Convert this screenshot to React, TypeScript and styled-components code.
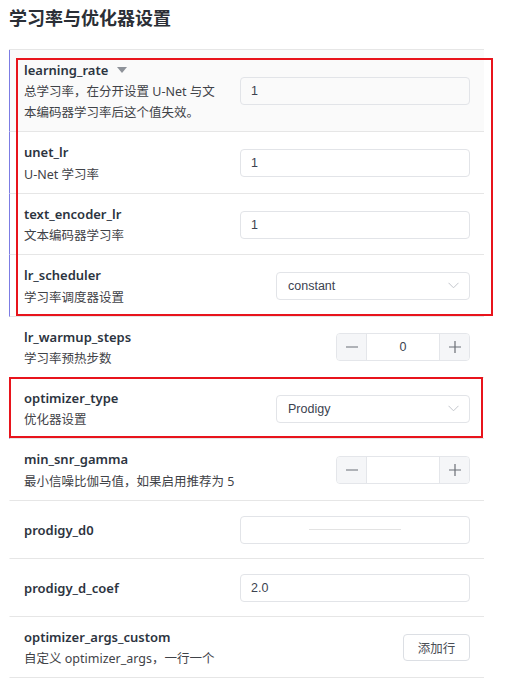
import React from 'react';
import styled, { createGlobalStyle } from 'styled-components';

const GlobalStyle = createGlobalStyle`
  body {
    margin: 0;
    background: #ffffff;
    font-family: "Noto Sans", "Noto Sans CJK SC", sans-serif;
    color: #303133;
  }
`;

interface Field {
  name: string;
  desc?: string;
  kind: 'text' | 'select' | 'number' | 'button' | 'blank';
  value?: string;
  caret?: boolean;
  marked?: boolean;
  hovered?: boolean;
}

const fields: Field[] = [
  { name: 'learning_rate', desc: '总学习率，在分开设置 U-Net 与文\n本编码器学习率后这个值失效。', kind: 'text', value: '1', caret: true, marked: true, hovered: true },
  { name: 'unet_lr', desc: 'U-Net 学习率', kind: 'text', value: '1', marked: true },
  { name: 'text_encoder_lr', desc: '文本编码器学习率', kind: 'text', value: '1', marked: true },
  { name: 'lr_scheduler', desc: '学习率调度器设置', kind: 'select', value: 'constant', marked: true },
  { name: 'lr_warmup_steps', desc: '学习率预热步数', kind: 'number', value: '0' },
  { name: 'optimizer_type', desc: '优化器设置', kind: 'select', value: 'Prodigy', marked: true },
  { name: 'min_snr_gamma', desc: '最小信噪比伽马值，如果启用推荐为 5', kind: 'number', value: '' },
  { name: 'prodigy_d0', kind: 'blank' },
  { name: 'prodigy_d_coef', kind: 'text', value: '2.0' },
  { name: 'optimizer_args_custom', desc: '自定义 optimizer_args，一行一个', kind: 'button', value: '添加行' },
];

const Page = styled.div`
  position: relative;
  width: 509px;
  padding: 6px 0 0 9px;
  box-sizing: border-box;
`;

const Heading = styled.h2`
  margin: 0 0 19px;
  font-size: 18px;
  line-height: 24px;
  font-weight: 700;
  color: #2b2f36;
`;

const Panel = styled.div`
  width: 475px;
  border-top: 1px solid #e6e6e6;
`;

const Row = styled.div<{ $marked?: boolean; $hovered?: boolean }>`
  display: grid;
  grid-template-columns: 1fr 230px;
  align-items: center;
  min-height: 40px;
  padding: 9px 14px 8px 14px;
  border-left: 1px solid ${(p) => (p.$marked ? '#7c7ce4' : 'transparent')};
  border-bottom: 1px solid #e6e6e6;
  background: ${(p) => (p.$hovered ? '#fafafa' : '#ffffff')};
`;

const Label = styled.div`
  display: flex;
  flex-direction: column;
`;

const Title = styled.div`
  display: flex;
  align-items: center;
  gap: 9px;
  font-size: 13px;
  font-weight: 600;
  line-height: 22.4px;
  color: #2c3440;
`;

const Desc = styled.div`
  font-size: 12.5px;
  line-height: 21px;
  color: #3f4247;
  white-space: pre-line;
`;

const Control = styled.div`
  display: flex;
  justify-content: flex-end;
  align-items: center;
`;

const TextBox = styled.div`
  box-sizing: border-box;
  width: 100%;
  height: 28px;
  display: flex;
  align-items: center;
  padding: 0 10px;
  border: 1px solid #e2e4e8;
  border-radius: 4px;
  font-family: "Liberation Sans", Arial, sans-serif;
  font-size: 12.5px;
  color: #3c4250;
`;

const BlankBox = styled(TextBox)`
  justify-content: center;
`;

const Placeholder = styled.span`
  width: 92px;
  height: 1px;
  background: #e3e3e3;
`;

const SelectBox = styled(TextBox)`
  width: 194px;
  justify-content: space-between;
  padding: 0 10px 0 11px;
  background: #ffffff;
`;

const Stepper = styled.div`
  box-sizing: border-box;
  width: 134px;
  height: 28px;
  display: grid;
  grid-template-columns: 30px 1fr 30px;
  border: 1px solid #e4e6ea;
  border-radius: 4px;
  overflow: hidden;
  font-family: "Liberation Sans", Arial, sans-serif;
`;

const StepButton = styled.div<{ $side: 'left' | 'right' }>`
  display: flex;
  align-items: center;
  justify-content: center;
  background: #f5f6f8;
  color: #6b6f76;
  border-${(p) => (p.$side === 'left' ? 'right' : 'left')}: 1px solid #e4e6ea;
`;

const StepValue = styled.div`
  display: flex;
  align-items: center;
  justify-content: center;
  font-size: 12.5px;
  color: #3c4250;
`;

const AddButton = styled.button`
  box-sizing: border-box;
  width: 67px;
  height: 27px;
  border: 1px solid #dcdfe4;
  border-radius: 4px;
  background: #ffffff;
  font-family: "Noto Sans CJK SC", sans-serif;
  font-size: 12.5px;
  color: #4a4e55;
  padding: 0;
`;

const Annotation = styled.div`
  position: absolute;
  box-sizing: border-box;
  border: 2px solid #e8141c;
  pointer-events: none;
`;

const Caret = () => (
  <svg width="10" height="7" viewBox="0 0 10 7">
    <polygon points="0,0 10,0 5,6" fill="#8e9299" />
  </svg>
);

const Chevron = () => (
  <svg width="11" height="7" viewBox="0 0 11 7">
    <polyline points="0.5,0.8 5.5,5.8 10.5,0.8" fill="none" stroke="#c3c6cc" strokeWidth="1" />
  </svg>
);

const Minus = () => (
  <svg width="12" height="12" viewBox="0 0 12 12">
    <line x1="0" y1="6" x2="12" y2="6" stroke="#6b6f76" strokeWidth="1.2" />
  </svg>
);

const Plus = () => (
  <svg width="12" height="12" viewBox="0 0 12 12">
    <line x1="0" y1="6" x2="12" y2="6" stroke="#6b6f76" strokeWidth="1.2" />
    <line x1="6" y1="0" x2="6" y2="12" stroke="#6b6f76" strokeWidth="1.2" />
  </svg>
);

const renderControl = (f: Field) => {
  switch (f.kind) {
    case 'text':
      return <TextBox>{f.value}</TextBox>;
    case 'blank':
      return (
        <BlankBox>
          <Placeholder />
        </BlankBox>
      );
    case 'select':
      return (
        <SelectBox>
          <span>{f.value}</span>
          <Chevron />
        </SelectBox>
      );
    case 'number':
      return (
        <Stepper>
          <StepButton $side="left">
            <Minus />
          </StepButton>
          <StepValue>{f.value}</StepValue>
          <StepButton $side="right">
            <Plus />
          </StepButton>
        </Stepper>
      );
    case 'button':
      return <AddButton>{f.value}</AddButton>;
  }
};

export default function App() {
  return (
    <>
      <GlobalStyle />
      <Page>
        <Heading>学习率与优化器设置</Heading>
        <Panel>
          {fields.map((f) => (
            <Row key={f.name} $marked={f.marked} $hovered={f.hovered}>
              <Label>
                <Title>
                  {f.name}
                  {f.caret && <Caret />}
                </Title>
                {f.desc && <Desc>{f.desc}</Desc>}
              </Label>
              <Control>{renderControl(f)}</Control>
            </Row>
          ))}
        </Panel>
        <Annotation style={{ left: 16, top: 58, width: 477, height: 258 }} />
        <Annotation style={{ left: 9, top: 377, width: 474, height: 61 }} />
      </Page>
    </>
  );
}
